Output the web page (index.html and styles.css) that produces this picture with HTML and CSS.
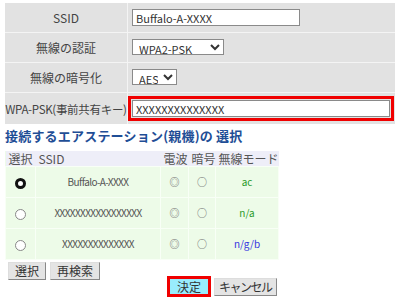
FILE: index.html
```html
<!DOCTYPE html>
<html lang="ja">
<head>
  <meta charset="UTF-8" />
  <title>無線設定</title>
  <link rel="stylesheet" href="styles.css">
</head>
<body>

  <table class="settings">
    <tr>
      <th>SSID</th>
      <td><input type="text" class="ssid-input" value="Buffalo-A-XXXX"></td>
    </tr>
    <tr>
      <th>無線の認証</th>
      <td><select class="auth-select"><option>WPA2-PSK</option></select></td>
    </tr>
    <tr>
      <th>無線の暗号化</th>
      <td><select class="enc-select"><option>AES</option></select></td>
    </tr>
    <tr>
      <th class="psk-label">WPA-PSK(事前共有キー)</th>
      <td><div class="hilite"><input type="text" class="psk-input" value="XXXXXXXXXXXXXX"></div></td>
    </tr>
  </table>

  <h2>接続するエアステーション(親機)の 選択</h2>

  <table class="stations">
    <colgroup>
      <col class="c-sel">
      <col class="c-ssid">
      <col class="c-sig">
      <col class="c-enc">
      <col class="c-mode">
    </colgroup>
    <tr class="head">
      <th>選択</th>
      <th>SSID</th>
      <th>電波</th>
      <th>暗号</th>
      <th>無線モード</th>
    </tr>
    <tr>
      <td><span class="radio on"></span></td>
      <td>Buffalo-A-XXXX</td>
      <td class="sym">◎</td>
      <td class="sym">○</td>
      <td class="mode green">ac</td>
    </tr>
    <tr>
      <td><span class="radio"></span></td>
      <td>XXXXXXXXXXXXXXXXX</td>
      <td class="sym">◎</td>
      <td class="sym">○</td>
      <td class="mode green">n/a</td>
    </tr>
    <tr>
      <td><span class="radio"></span></td>
      <td>XXXXXXXXXXXXXX</td>
      <td class="sym">◎</td>
      <td class="sym">○</td>
      <td class="mode blue">n/g/b</td>
    </tr>
  </table>

  <div class="tools">
    <button class="btn">選択</button>
    <button class="btn">再検索</button>
  </div>

  <div class="actions">
    <button class="btn ok">決定</button>
    <button class="btn cancel">キャンセル</button>
  </div>

</body>
</html>
```

FILE: styles.css
```css
body {
  margin: 0;
  padding: 3px 5px 0;
  font-family: "Noto Sans CJK JP", "DejaVu Sans", sans-serif;
  font-size: 12px;
  color: #444;
  background: #fff;
}

.settings {
  width: 390px;
  border-collapse: collapse;
  background: #e2e2e2;
}

.settings th,
.settings td {
  height: 29px;
  padding: 0;
  border-bottom: 1px solid #f4f4f4;
}

.settings th {
  width: 122px;
  font-weight: normal;
  text-align: center;
  border-right: 1px solid #f4f4f4;
}

.settings td {
  padding-left: 4px;
}

.settings tr:last-child th,
.settings tr:last-child td {
  height: 31px;
  border-bottom: none;
}

.settings th.psk-label {
  font-size: 11.5px;
  letter-spacing: -0.3px;
}

input, select, button {
  font-family: "Noto Sans CJK JP", "DejaVu Sans", sans-serif;
  font-size: 11px;
  color: #333;
  margin: 0;
}

input[type="text"] {
  height: 15px;
  padding: 0 3px;
  border: 1px solid #8a8a8a;
  background: #fff;
  box-sizing: content-box;
}

.ssid-input {
  width: 160px;
}

select {
  height: 16px;
  padding: 0 2px;
  border: 1px solid #8a8a8a;
  background: #fff;
  border-radius: 0;
}

.auth-select {
  width: 92px;
}

.enc-select {
  width: 45px;
}

.hilite {
  display: inline-block;
  border: 3px solid #f00000;
  margin-left: -4px;
  padding: 1px;
}

.psk-input {
  width: 250px;
  height: 16px;
}

h2 {
  margin: 3px 0 7px;
  height: 17px;
  line-height: 17px;
  font-size: 13px;
  color: #1f4e96;
  font-weight: bold;
  letter-spacing: 0.2px;
}

.stations {
  width: 273px;
  table-layout: fixed;
  border-collapse: collapse;
  background: #edfbe8;
}

.c-sel { width: 30px; }
.c-ssid { width: 125px; }
.c-sig { width: 28px; }
.c-enc { width: 27px; }
.c-mode { width: 63px; }

.stations th {
  height: 15px;
  line-height: 15px;
  padding: 0 0 0 3px;
  background: #eeeef8;
  font-weight: normal;
  text-align: left;
  color: #555;
  white-space: nowrap;
}

.stations td {
  height: 30px;
  line-height: 14px;
  padding: 0;
  text-align: center;
  border: 1px solid #f8fff6;
  font-size: 10px;
  color: #555;
  letter-spacing: -0.6px;
  white-space: nowrap;
  overflow: hidden;
}

.stations td.sym {
  font-size: 10px;
  color: #666;
  letter-spacing: 0;
}

.stations td.mode {
  font-size: 10px;
  letter-spacing: 0;
}

.stations td.green { color: #2a9a2a; }
.stations td.blue { color: #3434e0; }

.radio {
  display: inline-block;
  width: 9px;
  height: 9px;
  border: 1px solid #888;
  border-radius: 50%;
  background: #fff;
  vertical-align: middle;
}

.radio.on {
  width: 5px;
  height: 5px;
  border: 3px solid #111;
}

.tools {
  margin: 2px 0 0 3px;
  display: flex;
  gap: 4px;
}

.btn {
  height: 18px;
  padding: 0 6px;
  background: #e4e4e4;
  border: 1px solid #888;
  border-top-color: #ddd;
  border-left-color: #ddd;
  font-size: 12px;
  line-height: 14px;
}

.btn.cancel {
  padding: 0 4px;
  letter-spacing: -1.5px;
}

.actions {
  display: flex;
  gap: 3px;
  margin: -4px 0 0 162px;
  align-items: center;
}

.btn.ok {
  height: 21px;
  padding: 0 7px;
  background: #99ecfd;
  border: 3px solid #f00000;
}
```
